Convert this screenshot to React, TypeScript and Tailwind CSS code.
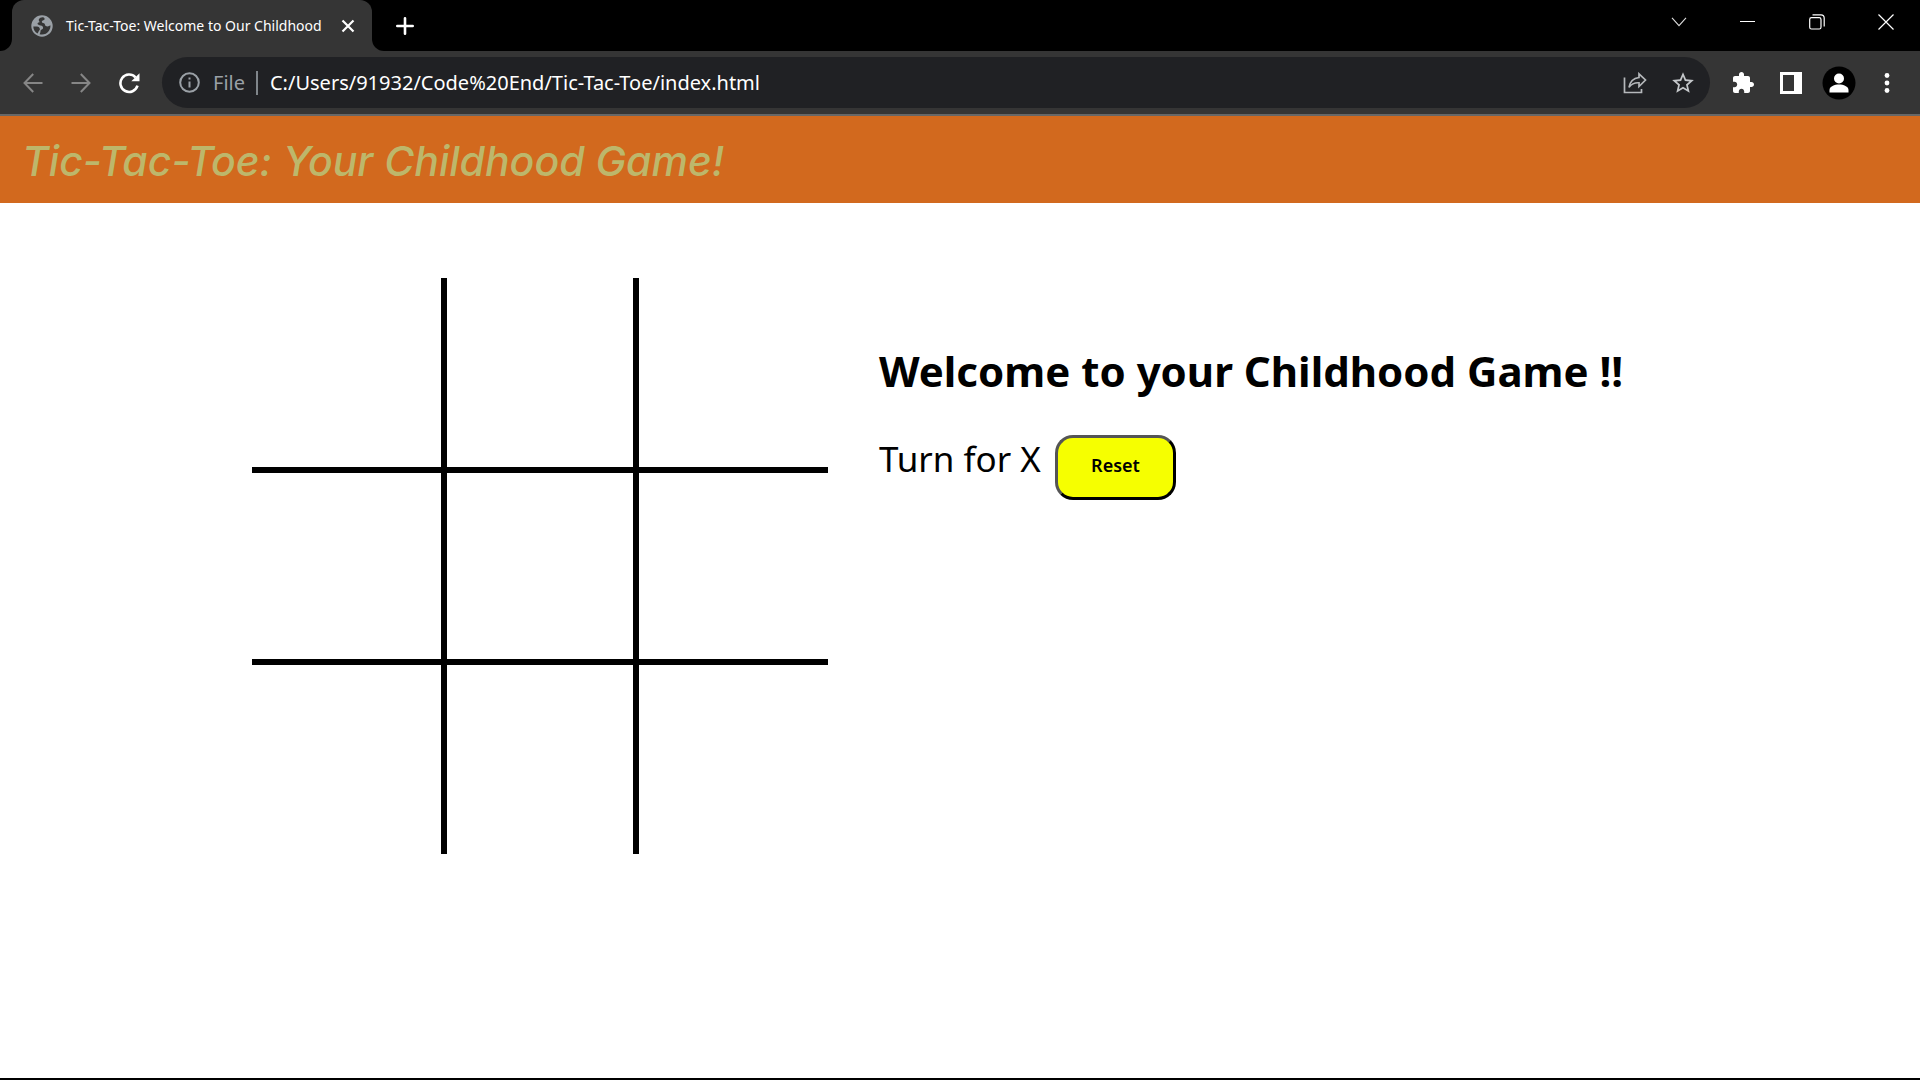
import { useState } from "react";
import type { ReactNode } from "react";

const cellBorders = [
  "border-r-3 border-b-3",
  "border-x-3 border-b-3",
  "border-l-3 border-b-3",
  "border-y-3 border-r-3",
  "border-3",
  "border-y-3 border-l-3",
  "border-t-3 border-r-3",
  "border-x-3 border-t-3",
  "border-t-3 border-l-3",
];

function IconButton({ label, className = "", children }: { label: string; className?: string; children: ReactNode }) {
  return (
    <button type="button" aria-label={label} className={`flex h-8 w-12 shrink-0 items-center justify-center ${className}`}>
      {children}
    </button>
  );
}

function GlobeIcon() {
  return (
    <svg width="22" height="22" viewBox="0 0 22 22" className="shrink-0" aria-hidden="true">
      <circle cx="11" cy="11" r="10.7" fill="#9aa0a6" />
      <path
        d="M12.6 2.4C11 2 8.600 2.500 7.800 4.500C7.400 6 8.800 6.300 8.400 7.200C7.900 8 6.600 7.600 6.500 8.600C6.400 9.600 8.300 10.400 9.600 10.600C11.300 10.900 12.500 12 12 13.400C11.600 14.500 10.200 14.200 9.700 15.300C9.300 16.400 9.600 18 8.500 19.200C12 20.300 15.800 19 17.800 16C19 14.300 19.600 12.200 19.400 10.300C18 11.500 16 11.700 14.700 10.900C13.600 10.200 14.400 8.600 12.900 8.200C11.700 7.900 10.500 7.500 10.900 6.200C11.300 5.100 13.200 5.500 13.600 4.200C13.800 3.400 13.300 2.700 12.600 2.400Z"
        fill="#353535"
      />
      <path d="M2.300 11.500H6C7.600 11.500 8.900 12.600 8.900 14.300C8.900 15.400 7.600 15.700 7.400 17L6.600 18.500C3.800 17 2.300 14.400 2.300 11.500Z" fill="#353535" />
    </svg>
  );
}

function TabStrip() {
  return (
    <div className="flex h-[51px] bg-black">
      <div className="flex w-3 items-end bg-[#353535]">
        <div className="h-full w-full rounded-br-xl bg-black" />
      </div>
      <div className="bg-black">
        <div className="flex h-full w-[360px] items-center rounded-t-xl bg-[#353535] pr-[14px] pl-[19px]">
          <GlobeIcon />
          <span className="ml-[13px] flex-1 text-[14px] leading-5 whitespace-nowrap text-white">Tic-Tac-Toe: Welcome to Our Childhood</span>
          <button type="button" aria-label="Close tab" className="flex h-6 w-5 items-center justify-center">
            <svg width="14" height="14" viewBox="0 0 14 14" stroke="#fff" strokeWidth="2.2" aria-hidden="true">
              <path d="M1.500 1.500L12.500 12.500M12.500 1.500L1.500 12.500" />
            </svg>
          </button>
        </div>
      </div>
      <div className="flex w-3 bg-[#353535]">
        <div className="h-full w-full rounded-bl-xl bg-black" />
      </div>
      <button type="button" aria-label="New tab" className="flex w-[42px] items-center justify-center">
        <svg width="18" height="18" viewBox="0 0 18 18" stroke="#fff" strokeWidth="2.6" strokeLinecap="round" aria-hidden="true">
          <path d="M9 1.300V16.700M1.300 9H16.700" />
        </svg>
      </button>
      <div className="ml-auto flex h-[43px]">
        <button type="button" aria-label="Search tabs" className="flex w-[68px] items-center justify-center">
          <svg width="16" height="10" viewBox="0 0 16 10" fill="none" stroke="#ddd" strokeWidth="1.100" aria-hidden="true">
            <path d="M1 .8L8 8.600L15 .8" />
          </svg>
        </button>
        <button type="button" aria-label="Minimize" className="flex w-[69px] items-center justify-center">
          <span className="h-px w-[15px] bg-white" />
        </button>
        <button type="button" aria-label="Restore" className="flex w-[69px] items-center justify-center">
          <svg width="16" height="16" viewBox="0 0 16 16" fill="none" stroke="#fff" strokeWidth="1.200" aria-hidden="true">
            <rect x=".7" y="3.700" width="11.300" height="11.300" rx="1.800" />
            <path d="M3.500 .8H12C14 .8 15.200 2.200 15.200 4V12.500" />
          </svg>
        </button>
        <button type="button" aria-label="Close window" className="flex w-[69px] items-center justify-center">
          <svg width="16" height="16" viewBox="0 0 16 16" stroke="#fff" strokeWidth="1.200" aria-hidden="true">
            <path d="M.5 .5L15.500 15.500M15.500 .5L.5 15.500" />
          </svg>
        </button>
      </div>
    </div>
  );
}

function Toolbar() {
  return (
    <div className="flex h-[63px] items-center bg-[#353535] px-[9px]">
      <IconButton label="Back">
        <svg width="20" height="20" viewBox="0 0 20 20" fill="none" stroke="#868686" strokeWidth="2" aria-hidden="true">
          <path d="M19.500 10H1.500M10.200 1L1.500 10L10.200 19" />
        </svg>
      </IconButton>
      <IconButton label="Forward">
        <svg width="20" height="20" viewBox="0 0 20 20" fill="none" stroke="#868686" strokeWidth="2" aria-hidden="true">
          <path d="M.5 10H18.500M9.800 1L18.500 10L9.800 19" />
        </svg>
      </IconButton>
      <IconButton label="Reload">
        <svg width="22" height="22" viewBox="0 0 22 22" aria-hidden="true">
          <path d="M19.500 13.700A8.700 8.700 0 1 1 17.500 5.300" fill="none" stroke="#fff" strokeWidth="2.600" />
          <path d="M21.500 1.200V9.300H13.300Z" fill="#fff" />
        </svg>
      </IconButton>
      <div className="ml-[9px] flex h-[51px] min-w-0 flex-1 items-center rounded-full bg-[#202124] pr-[3px] pl-[17px]">
        <svg width="21" height="21" viewBox="0 0 21 21" className="shrink-0" fill="none" stroke="#9aa0a6" strokeWidth="2" aria-hidden="true">
          <circle cx="10.500" cy="10.500" r="9.300" />
          <path d="M10.500 9.500V15.500M10.500 5.500V7.600" />
        </svg>
        <label htmlFor="address" className="ml-[13px] text-[20px] leading-6 text-[#9aa0a6]">File</label>
        <span className="mr-3 ml-[11px] h-6 w-[2px] shrink-0 bg-[#80868b]" />
        <input
          id="address"
          type="text"
          defaultValue="C:/Users/91932/Code%20End/Tic-Tac-Toe/index.html"
          className="h-8 min-w-0 flex-1 bg-transparent text-[20px] text-white outline-none"
        />
        <IconButton label="Share">
          <svg width="24" height="22" viewBox="0 0 24 22" fill="none" stroke="#b5b8bb" strokeWidth="1.700" aria-hidden="true">
            <path d="M1.500 5.500V20.500H18.500V17" />
            <path d="M16 1.800L22.500 8L16 14.500V10.800C11.500 10.500 8.500 12 6 15.300C7 9.500 10.500 6.200 16 5.500Z" strokeLinejoin="miter" />
          </svg>
        </IconButton>
        <IconButton label="Bookmark">
          <svg width="26" height="26" viewBox="0 0 24 24" fill="#c4c7ca" aria-hidden="true">
            <path d="M22 9.240l-7.190-.62L12 2 9.190 8.630 2 9.240l5.460 4.730L5.820 21 12 17.270 18.180 21l-1.630-7.030L22 9.240zM12 15.400l-3.760 2.270 1-4.280-3.320-2.880 4.380-.38L12 6.100l1.710 4.040 4.380.38-3.320 2.880 1 4.280L12 15.400z" />
          </svg>
        </IconButton>
      </div>
      <IconButton label="Extensions" className="ml-[9px]">
        <svg width="24" height="24" viewBox="0 0 24 24" fill="#fff" aria-hidden="true">
          <path d="M20.500 11H19V7c0-1.100-.9-2-2-2h-4V3.500C13 2.120 11.880 1 10.500 1S8 2.120 8 3.500V5H4c-1.100 0-1.990.9-1.990 2v3.800H3.500c1.490 0 2.700 1.210 2.700 2.700s-1.210 2.700-2.700 2.700H2V20c0 1.100.9 2 2 2h3.800v-1.500c0-1.490 1.210-2.700 2.700-2.700 1.490 0 2.700 1.210 2.700 2.700V22H17c1.100 0 2-.9 2-2v-4h1.500c1.380 0 2.500-1.120 2.500-2.500S21.880 11 20.500 11z" />
        </svg>
      </IconButton>
      <IconButton label="Side panel">
        <svg width="22" height="22" viewBox="0 0 22 22" aria-hidden="true">
          <rect width="22" height="22" fill="#fff" />
          <rect x="3" y="3" width="11" height="16" fill="#353535" />
        </svg>
      </IconButton>
      <IconButton label="Profile">
        <svg width="34" height="34" viewBox="0 0 34 34" className="shrink-0" aria-hidden="true">
          <circle cx="17" cy="17" r="16.500" fill="#000" />
          <circle cx="17" cy="12.500" r="5" fill="#fff" />
          <path d="M7.500 26.500V24C7.500 20.500 12.500 18.600 17 18.600S26.500 20.500 26.500 24V26.500Z" fill="#fff" />
        </svg>
      </IconButton>
      <IconButton label="Menu">
        <svg width="6" height="22" viewBox="0 0 6 22" fill="#fff" aria-hidden="true">
          <circle cx="3" cy="3.500" r="2.400" />
          <circle cx="3" cy="11" r="2.400" />
          <circle cx="3" cy="18.500" r="2.400" />
        </svg>
      </IconButton>
    </div>
  );
}

export default function App() {
  const [cells, setCells] = useState<string[]>(Array(9).fill(""));
  const turn = cells.filter(Boolean).length % 2 === 0 ? "X" : "O";

  const play = (index: number) => {
    if (!cells[index]) setCells(cells.map((cell, i) => (i === index ? turn : cell)));
  };

  return (
    <div className="flex min-h-screen flex-col border-b-2 border-black bg-white font-['Noto_Sans',sans-serif] text-black">
      <TabStrip />
      <Toolbar />
      <header className="border-t-2 border-[#676767] bg-[#d2691e] px-[22px] pt-[15px] pb-3">
        <h1 className="font-[Inter,sans-serif] text-[41px] leading-[60px] font-medium text-[#bdb76b] italic">
          Tic-Tac-Toe: Your Childhood Game!
        </h1>
      </header>
      <main className="mx-auto mt-[75px] flex w-full max-w-[1416px] flex-wrap xl:flex-nowrap">
        <div className="grid shrink-0 grid-cols-3">
          {cells.map((mark, index) => (
            <button
              key={index}
              type="button"
              aria-label={`Cell ${index + 1}`}
              onClick={() => play(index)}
              className={`size-48 border-black text-8xl ${cellBorders[index]}`}
            >
              {mark}
            </button>
          ))}
        </div>
        <section className="min-w-0 flex-1 pt-[60px] pl-[51px]">
          <h2 className="text-[42px] leading-[66px] font-bold">Welcome to your Childhood Game !!</h2>
          <div className="mt-[31px] flex items-start">
            <p className="w-[176px] text-[35px] leading-12 whitespace-nowrap">Turn for {turn}</p>
            <button
              type="button"
              onClick={() => setCells(Array(9).fill(""))}
              className="h-[65px] w-[121px] rounded-[18px] border-3 border-t-[#555] border-r-black border-b-black border-l-[#555] bg-[#f6ff00] pb-1.5 text-[18px] leading-6 font-semibold"
            >
              Reset
            </button>
          </div>
        </section>
      </main>
    </div>
  );
}
